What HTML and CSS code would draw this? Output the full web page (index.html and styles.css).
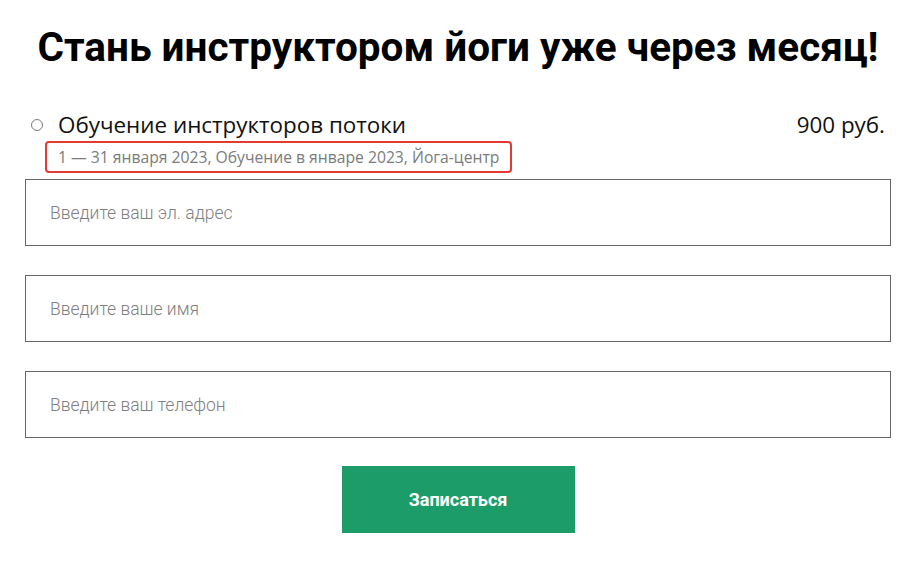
FILE: index.html
```html
<!DOCTYPE html>
<html lang="ru">
<head>
<meta charset="utf-8">
<title>Стань инструктором йоги</title>
<link rel="stylesheet" href="styles.css">
</head>
<body>
<div class="page">
  <h1 class="title">Стань инструктором йоги уже через месяц!</h1>
  <div class="option">
    <span class="radio"></span>
    <span class="option-name">Обучение инструкторов потоки</span>
    <span class="option-price">900 руб.</span>
  </div>
  <div class="option-meta-row">
    <span class="option-meta">1 — 31 января 2023, Обучение в январе 2023, Йога-центр</span>
  </div>
  <form class="fields">
    <input class="field" type="email" placeholder="Введите ваш эл. адрес">
    <input class="field" type="text" placeholder="Введите ваше имя">
    <input class="field" type="tel" placeholder="Введите ваш телефон">
    <button class="submit" type="button">Записаться</button>
  </form>
</div>
</body>
</html>
```
FILE: styles.css
```css
html, body {
  margin: 0;
  padding: 0;
  background: #fff;
}

.page {
  margin: 0 16px 0 25px;
  font-family: "Open Sans", "Noto Sans", sans-serif;
}

.title {
  margin: 0;
  padding-top: 23px;
  font-family: Roboto, "Liberation Sans", sans-serif;
  font-weight: 700;
  font-size: 40.5px;
  line-height: 48px;
  text-align: center;
  color: #000;
}

.option {
  margin-top: 39px;
  height: 30px;
  display: flex;
  align-items: center;
  padding: 0 6px;
  font-size: 22.4px;
  line-height: 30px;
  color: #111;
}

.radio {
  width: 12px;
  height: 12px;
  box-sizing: border-box;
  border: 1px solid #7a7a7a;
  border-radius: 50%;
  flex: none;
}

.option-name {
  margin-left: 15px;
}

.option-price {
  margin-left: auto;
}

.option-meta-row {
  margin-top: 1px;
  padding-left: 20px;
}

.option-meta {
  display: inline-block;
  border: 2px solid #e23b33;
  border-radius: 4px;
  padding: 4px 11px;
  font-size: 15.7px;
  line-height: 20px;
  color: #7b7b7b;
}

.fields {
  margin: 6px 0 0;
  display: flex;
  flex-direction: column;
  gap: 29px;
}

.field {
  display: block;
  width: 100%;
  height: 67px;
  box-sizing: border-box;
  margin: 0;
  border: 1px solid #666;
  border-radius: 0;
  padding: 0 24px;
  font-family: Roboto, "Liberation Sans", sans-serif;
  font-weight: 300;
  font-size: 17.5px;
  color: #333;
  background: #fff;
  outline: none;
}

.field::placeholder {
  color: #808080;
}

.submit {
  align-self: center;
  margin-top: -1px;
  width: 233px;
  height: 67px;
  border: none;
  background: #1b9c69;
  color: #fff;
  font-family: Roboto, "Liberation Sans", sans-serif;
  font-weight: 700;
  font-size: 18px;
  cursor: pointer;
}
```
